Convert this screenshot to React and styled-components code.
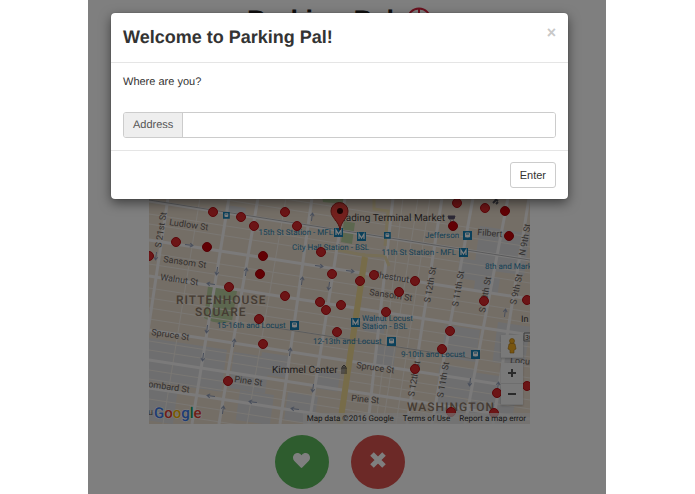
import styled, { createGlobalStyle } from "styled-components"
import { FaHeart } from "react-icons/fa"

const GlobalStyle = createGlobalStyle`
   *{
      box-sizing: border-box;
   }

   body{
      margin: 0;
      background: #fff;
      color: #333;
      font: 11px/16px "Liberation Sans", Arial, sans-serif;
      text-rendering: geometricPrecision;
   }
`

const Page = styled.div`
   padding: 0 89px 0 88px;
`

const Screen = styled.div`
   position: relative;
   min-height: 100vh;
   padding-right: 15px;
   background: #fff;
   overflow: hidden;
`

const Head = styled.header`
   display: flex;
   justify-content: center;
   align-items: center;
   gap: 12px;
   height: 124px;
   padding: 6px 0 90px;
`

const Logo = styled.h1`
   margin: 0;
   color: #222;
   font-size: 27px;
   line-height: 28px;
`

const MapBox = styled.div`
   position: relative;
   height: 300px;
   margin: 0 61px;
   overflow: hidden;
   font-family: Roboto, sans-serif;

   & > svg{
      display: block;
      width: 100%;
      height: 100%;
   }
`

const Controls = styled.div`
   position: absolute;
   right: 7px;
   bottom: 19px;
   display: flex;
   flex-direction: column;
   width: 22px;
`

const Control = styled.button`
   display: flex;
   justify-content: center;
   align-items: center;
   height: ${({ $tall }) => $tall ? 23 : 21}px;
   margin: 0 0 ${({ $gap }) => $gap || 0}px;
   padding: 0;
   border: 0;
   border-bottom: 1px solid #e0e0e0;
   background: #f2f2f2;
   box-shadow: 0 1px 2px rgba(0, 0, 0, 0.2);
`

const Credits = styled.div`
   position: absolute;
   right: 0;
   bottom: 0;
   display: flex;
   gap: 9px;
   padding: 0 4px;
   background: rgba(235, 235, 235, 0.7);
   color: #333;
   font-size: 8px;
   line-height: 11px;
   white-space: nowrap;

   & a{
      color: inherit;
      text-decoration: none;
   }
`

const Actions = styled.div`
   display: flex;
   justify-content: center;
   gap: 22px;
   padding-top: 11px;
`

const RoundButton = styled.button`
   display: flex;
   justify-content: center;
   align-items: center;
   width: 54px;
   height: 54px;
   padding: 0 0 4px;
   border: 0;
   border-radius: 50%;
   background: ${({ $color }) => $color};
   color: #fff;
`

const Backdrop = styled.div`
   position: absolute;
   inset: 0;
   padding: 13px 38px 0 23px;
   background: rgba(0, 0, 0, 0.5);
`

const Modal = styled.section`
   border-radius: 4px;
   background: #fff;
   box-shadow: 0 4px 12px rgba(0, 0, 0, 0.5), 0 0 1px rgba(0, 0, 0, 0.5);
`

const ModalHead = styled.div`
   display: flex;
   justify-content: space-between;
   align-items: flex-start;
   padding: 12px 12px 13px;
   border-bottom: 1px solid #e5e5e5;
`

const ModalTitle = styled.h2`
   margin: 0;
   font-size: 18px;
   line-height: 24px;
`

const Close = styled.button`
   padding: 0;
   border: 0;
   background: none;
   color: #c8c8c8;
   font: bold 16px/16px "Liberation Sans", Arial, sans-serif;
`

const ModalBody = styled.div`
   padding: 11px 12px 12px;
`

const Question = styled.p`
   margin: 0 0 22px;
`

const InputGroup = styled.div`
   display: flex;
   height: 26px;
   border: 1px solid #ccc;
   border-radius: 3px;
   overflow: hidden;

   & label{
      padding: 4px 9px;
      border-right: 1px solid #ccc;
      background: #eee;
      color: #555;
   }

   & input{
      flex: 1;
      min-width: 0;
      padding: 0 9px;
      border: 0;
      outline: 0;
      font: inherit;
   }
`

const ModalFoot = styled.div`
   display: flex;
   justify-content: flex-end;
   padding: 11px 12px;
   border-top: 1px solid #e5e5e5;
`

const EnterButton = styled.button`
   height: 26px;
   padding: 0 9px;
   border: 1px solid #ccc;
   border-radius: 3px;
   background: #fff;
   color: #333;
   font: inherit;
`

// y at the left edge of the streets that run east
const MAIN_STREETS = [201, 240, 276, 330, 360, 388]
const LANES = [178, 188, 214, 224, 253, 264, 288, 298, 308, 319, 341, 350, 370, 379, 399, 411]

// top x and bottom x of the numbered streets
const AVENUES = [
   [168, 134], [229, 192], [258, 219], [312, 280], [345, 309],
   [393, 368], [442, 407], [473, 432], [508, 465], [529, 493]
]
const SIDE_LANES = [[200, 163], [286, 247], [418, 383], [403, 376], [430, 396]]

const GREY_BLOCKS = [
   [149, 338, 78, 42], [234, 352, 36, 36], [262, 352, 28, 22], [150, 384, 28, 36],
   [240, 390, 34, 30], [316, 370, 24, 18], [288, 392, 30, 28], [480, 226, 50, 42],
   [460, 258, 34, 20], [476, 274, 24, 17], [446, 325, 34, 32], [440, 364, 34, 30],
   [472, 372, 46, 48], [498, 322, 32, 40], [376, 345, 20, 20], [366, 315, 20, 16],
   [226, 205, 20, 9], [436, 395, 30, 26]
]

const DOTS = [
   [213, 212], [241, 217], [254, 226], [176, 242], [149, 256], [229, 287], [285, 212],
   [297, 226], [321, 252], [332, 274], [360, 281], [374, 275], [285, 296], [320, 302],
   [341, 305], [326, 310], [399, 292], [386, 312], [457, 203], [485, 208], [415, 281],
   [484, 301], [527, 300], [259, 319], [263, 344], [228, 381], [337, 332], [450, 331],
   [442, 349], [415, 369], [497, 393], [527, 386], [451, 412], [494, 413]
]
const FULL_DOTS = [[207, 247], [263, 256], [260, 274], [505, 211], [453, 226], [509, 236]]

const STREETS = [
   ["S 21st St", 161, 248, -81], ["Ludlow St", 169, 225, 8], ["Sansom St", 163, 262, 8],
   ["Walnut St", 160, 280, 8], ["Spruce St", 151, 335, 8], ["ombard St", 148, 387, 8],
   ["Pine St", 234, 382, 8], ["Chestnut", 373, 277, 9], ["Sansom St", 369, 295, 8],
   ["Spruce St", 356, 368, 8], ["Pine St", 351, 401, 5], ["Filbert", 477, 235, 5],
   ["N 9th St", 525, 256, -80], ["S 12th St", 430, 303, -80], ["S 11th St", 458, 307, -80],
   ["S 10th St", 485, 313, -80], ["S 9th St", 516, 305, -78], ["S 12th St", 414, 397, -80],
   ["S 11th St", 443, 398, -80], ["Locu", 510, 363, 5]
]

const STATIONS = [
   ["15th St Station - MFL", 333, 235, "end"], ["City Hall Station - BSL", 292, 250],
   ["11th St Station - MFL", 456, 255, "end"], ["Jefferson", 425, 238],
   ["8th and Mark", 485, 269], ["15-16th and Locust", 217, 328], ["Walnut Locust", 362, 321],
   ["Station - BSL", 362, 329], ["12-13th and Locust", 313, 344],
   ["9-10th and Locust", 401, 357]
]

const METRO = [[338, 232], [361, 236], [463, 252], [355, 322]]
const TRAINS = [[226, 215], [387, 235], [467, 235], [294, 325], [391, 341], [475, 354]]

const ARROWS = [
   [189, 245, 8], [156, 256, 98], [217, 271, 98], [246, 272, -82], [211, 284, 188],
   [312, 217, -82], [319, 266, 8], [350, 271, 8], [302, 281, -82], [329, 286, 98],
   [207, 329, 98], [234, 343, -82], [203, 357, 98], [290, 352, -82], [313, 388, 98],
   [295, 409, 188], [211, 396, 188], [253, 402, 188], [223, 410, -82], [470, 382, 98],
   [498, 386, -82], [505, 313, -82]
]

const CityMap = () => (
   <svg viewBox="149 124 381 300" preserveAspectRatio="xMidYMax slice" role="img" aria-label="Map of Philadelphia">
      <rect x="0" y="0" width="900" height="600" fill="#e9dccd" />
      {GREY_BLOCKS.map(([x, y, w, h]) => (
         <path key={`${x}-${y}`} d={`M${x} ${y}l${w} ${w * 0.15}l${-h * 0.14} ${h}l${-w} ${-w * 0.15}z`} fill="#dcdcde" />
      ))}
      <path d="M208 286l29 5-5 30q-14 5-28-3z" fill="#b9cf9f" />
      <path d="M322 196l23 2-2 6-20-2zM344 221l11 2-3 21-11-2z" fill="#b9cf9f" />
      <g stroke="#f3eee6" strokeWidth="1">
         {LANES.map((y) => <path key={y} d={`M149 ${y}l381 59`} />)}
         {SIDE_LANES.map(([a, b]) => <path key={a} d={`M${a} 198L${b} 424`} />)}
      </g>
      <g stroke="#f6f5f4" strokeWidth="3">
         {MAIN_STREETS.map((y) => <path key={y} d={`M149 ${y}l381 59`} />)}
         {AVENUES.map(([a, b]) => <path key={a} d={`M${a} 198L${b} 424`} />)}
      </g>
      <path d="M374 198v11l14 2-3 35M338 250l25 5 22 1M385 256l4 10M364 253L339 424" fill="none" stroke="#ecdcae" strokeWidth="3" />
      <path d="M365 257L340 424" stroke="#eed892" strokeWidth="6" />
      <g fill="none" stroke="#929eb8" strokeWidth="1">
         {ARROWS.map(([x, y, turn]) => (
            <path key={`${x}-${y}`} d="M-4 0H4M1 -2L4 0L1 2" transform={`translate(${x} ${y}) rotate(${turn})`} />
         ))}
      </g>
      <path d="M149 200L530 260" stroke="#b4b4b6" strokeWidth="1" />
      <path d="M270 327L475 359" stroke="#b7b7b7" strokeWidth="1" />

      <g fill="#68625d" fontSize="9">
         {STREETS.map(([name, x, y, turn]) => (
            <text key={`${name}-${x}`} transform={`translate(${x} ${y}) rotate(${turn})`}>{name}</text>
         ))}
      </g>
      <g fill="#2b83ae" fontSize="8">
         {STATIONS.map(([name, x, y, anchor]) => (
            <text key={name} x={x} y={y} textAnchor={anchor}>{name}</text>
         ))}
      </g>
      {METRO.map(([x, y]) => (
         <g key={`${x}-${y}`}>
            <rect x={x - 4} y={y - 4} width="9" height="9" fill="#1680b5" />
            <path d={`M${x - 2} ${y + 3}v-5l2.5 4 2.5-4v5`} fill="none" stroke="#fff" strokeWidth="1.2" />
         </g>
      ))}
      {TRAINS.map(([x, y], i) => (
         <g key={`${x}-${y}`} transform={`translate(${x} ${y}) scale(${i < 2 ? 0.75 : 1})`}>
            <rect x="-4" y="-4" width="9" height="9" fill="#1680b5" />
            <rect x="-2" y="-2.5" width="5" height="5" rx="1" fill="#fff" />
            <path d="M-1 -1H2M-2 4L-1 2.5M3 4L2 2.5" stroke="#1680b5" strokeWidth="1" />
         </g>
      ))}
      <g fill="#8b7867" fontSize="12" fontWeight="500" letterSpacing="1">
         <text x="176" y="304">RITTENHOUSE</text>
         <text x="195" y="316">SQUARE</text>
         <text x="407" y="411">WASHINGTON</text>
      </g>
      <g fill="#3f3b3a" fontSize="10">
         <text x="445" y="221" textAnchor="end">Reading Terminal Market</text>
         <text x="272" y="373">Kimmel Center</text>
         <text x="521" y="322" fontSize="9">In</text>
      </g>
      <g fill="#d92a2d" stroke="#b80d12" strokeWidth="1">
         {DOTS.map(([x, y]) => <circle key={`${x}-${y}`} cx={x} cy={y} r="4.5" />)}
      </g>
      <g fill="#c40009" stroke="#aa0008" strokeWidth="1">
         {FULL_DOTS.map(([x, y]) => <circle key={`${x}-${y}`} cx={x} cy={y} r="4.5" />)}
      </g>
      <path d="M448 216h7l-1 3h-5zM450 221h1M453 221h1" fill="#59506a" stroke="#59506a" strokeWidth="1" />
      <path d="M341 373h6M342 372v-4M344 372v-4M346 372v-4M341 368h6M342 367l2-2 2 2z" fill="none" stroke="#59544f" strokeWidth="1" />
      <path d="M493 203l3-3M496 204l2-2M495 199l3 2" stroke="#55555e" strokeWidth="2" />
      <path d="M532 333h-8v8h8" fill="#eee" stroke="#777" strokeWidth="1" />
      <text x="525" y="340" fontSize="7" fill="#444">30</text>

      <path d="M340 230c-1-9-9-12-9-19a8.500 8.500 0 0 1 17 0c0 7-7 10-8 19z" fill="#e9433c" stroke="#a4221e" strokeWidth="1" />
      <circle cx="340" cy="211" r="3" fill="#340807" />

      <text x="148" y="415" fontSize="9" fill="#68625d">u</text>
      <text x="154" y="418" fontSize="15" fontWeight="500" stroke="#fff" strokeWidth="1" paintOrder="stroke">
         <tspan fill="#3b78e7">G</tspan>
         <tspan fill="#dd3b2f">o</tspan>
         <tspan fill="#f4b400">o</tspan>
         <tspan fill="#3b78e7">g</tspan>
         <tspan fill="#0f9d58">l</tspan>
         <tspan fill="#dd3b2f">e</tspan>
      </text>
   </svg>
)

const Pegman = () => (
   <svg width="12" height="16" viewBox="0 0 12 16" fill="#f0aa1e" stroke="#a87315" strokeWidth="0.6">
      <path d="M3 6q3-2 6 0l1 5-2 1v3H4v-3l-2-1z" />
      <circle cx="6" cy="3" r="2.500" />
   </svg>
)

const Sign = ({ d }) => (
   <svg width="10" height="10" viewBox="0 0 10 10" stroke="#555" strokeWidth="2">
      <path d={d} />
   </svg>
)

export default function App() {
   return (
      <Page>
         <GlobalStyle />
         <Screen>
            <Head>
               <Logo>Parking Pal</Logo>
               <svg width="26" height="26" viewBox="0 0 26 26" fill="none" stroke="#d8233f" strokeWidth="2">
                  <circle cx="13" cy="13" r="11.500" />
                  <path d="M13 1V10M13 16V25M1 13H10M16 13H25" />
               </svg>
            </Head>
            <MapBox>
               <CityMap />
               <Controls>
                  <Control $tall $gap={5} aria-label="Street view"><Pegman /></Control>
                  <Control aria-label="Zoom in"><Sign d="M1 5H9M5 1V9" /></Control>
                  <Control aria-label="Zoom out"><Sign d="M1 5H9" /></Control>
               </Controls>
               <Credits>
                  <span>Map data ©2016 Google</span>
                  <a href="#terms">Terms of Use</a>
                  <a href="#report">Report a map error</a>
               </Credits>
            </MapBox>
            <Actions>
               <RoundButton $color="#5cb85c" aria-label="Save spot">
                  <FaHeart size={17} />
               </RoundButton>
               <RoundButton $color="#d9534f" aria-label="Reject spot">
                  <svg width="16" height="16" viewBox="0 0 16 16" stroke="currentColor" strokeWidth="5">
                     <path d="M2 2L14 14M14 2L2 14" />
                  </svg>
               </RoundButton>
            </Actions>
            <Backdrop>
               <Modal role="dialog" aria-labelledby="welcome">
                  <ModalHead>
                     <ModalTitle id="welcome">Welcome to Parking Pal!</ModalTitle>
                     <Close aria-label="Close">×</Close>
                  </ModalHead>
                  <ModalBody>
                     <Question>Where are you?</Question>
                     <InputGroup>
                        <label htmlFor="address">Address</label>
                        <input id="address" type="text" />
                     </InputGroup>
                  </ModalBody>
                  <ModalFoot>
                     <EnterButton>Enter</EnterButton>
                  </ModalFoot>
               </Modal>
            </Backdrop>
         </Screen>
      </Page>
   )
}
